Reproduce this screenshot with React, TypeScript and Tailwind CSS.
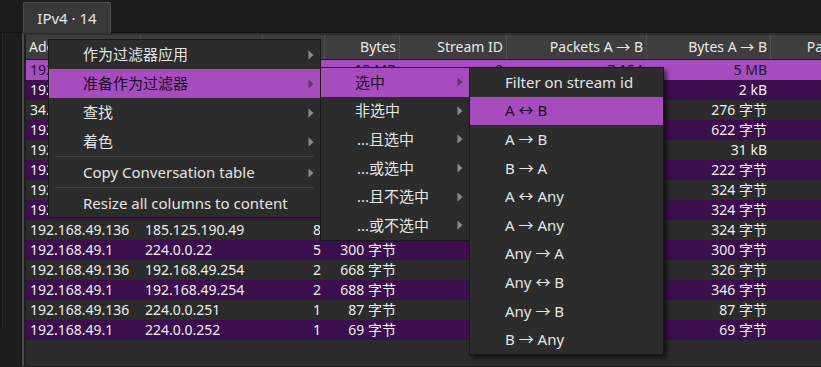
import React from "react";

type Row = {
  a: string;
  b: string;
  packets: string;
  bytes: string;
  sid: string;
  pab: string;
  bab: string;
  pba: string;
};

const ROWS: Row[] = [
  { a: "192.168.49.136", b: "91.189.91.49", packets: "9,870", bytes: "13 MB", sid: "0", pab: "7,154", bab: "5 MB", pba: "2,716" },
  { a: "192.168.49.1", b: "192.168.49.136", packets: "14", bytes: "2 kB", sid: "1", pab: "8", bab: "2 kB", pba: "6" },
  { a: "34.107.221.82", b: "192.168.49.136", packets: "4", bytes: "552 字节", sid: "2", pab: "2", bab: "276 字节", pba: "2" },
  { a: "192.168.49.136", b: "185.125.188.54", packets: "9", bytes: "1 kB", sid: "3", pab: "5", bab: "622 字节", pba: "4" },
  { a: "192.168.49.136", b: "91.189.91.98", packets: "60", bytes: "48 kB", sid: "4", pab: "33", bab: "31 kB", pba: "27" },
  { a: "192.168.49.136", b: "34.117.65.55", packets: "5", bytes: "444 字节", sid: "5", pab: "3", bab: "222 字节", pba: "2" },
  { a: "192.168.49.136", b: "185.125.190.57", packets: "8", bytes: "648 字节", sid: "6", pab: "4", bab: "324 字节", pba: "4" },
  { a: "192.168.49.136", b: "185.125.190.58", packets: "8", bytes: "648 字节", sid: "7", pab: "4", bab: "324 字节", pba: "4" },
  { a: "192.168.49.136", b: "185.125.190.49", packets: "8", bytes: "648 字节", sid: "8", pab: "4", bab: "324 字节", pba: "4" },
  { a: "192.168.49.1", b: "224.0.0.22", packets: "5", bytes: "300 字节", sid: "9", pab: "5", bab: "300 字节", pba: "0" },
  { a: "192.168.49.136", b: "192.168.49.254", packets: "2", bytes: "668 字节", sid: "10", pab: "1", bab: "326 字节", pba: "1" },
  { a: "192.168.49.1", b: "192.168.49.254", packets: "2", bytes: "688 字节", sid: "11", pab: "1", bab: "346 字节", pba: "1" },
  { a: "192.168.49.136", b: "224.0.0.251", packets: "1", bytes: "87 字节", sid: "12", pab: "1", bab: "87 字节", pba: "0" },
  { a: "192.168.49.1", b: "224.0.0.252", packets: "1", bytes: "69 字节", sid: "13", pab: "1", bab: "69 字节", pba: "0" },
];

const COLS = [
  { key: "a", title: "Address A", w: "w-[115px]", left: true },
  { key: "b", title: "Address B", w: "w-[122px]", left: true },
  { key: "packets", title: "Total", w: "w-[62px]", left: false },
  { key: "bytes", title: "Bytes", w: "w-[75px]", left: false },
  { key: "sid", title: "Stream ID", w: "w-[107px]", left: false },
  { key: "pab", title: "Packets A → B", w: "w-[140px]", left: false },
  { key: "bab", title: "Bytes A → B", w: "w-[124px]", left: false },
  { key: "pba", title: "Packets B → A", w: "w-[133px]", left: false },
] as const;

function Arrow({ dark }: { dark?: boolean }) {
  return (
    <svg width="6" height="10" viewBox="0 0 6 10" className="shrink-0">
      <path d="M0.5 0.5 L5.5 5 L0.5 9.5 Z" fill={dark ? "#5a3a66" : "#8c8c8c"} />
    </svg>
  );
}

function MenuItem({
  label,
  arrow,
  active,
  pl,
  h = "h-[29px]",
}: {
  label: string;
  arrow?: boolean;
  active?: boolean;
  pl: string;
  h?: string;
}) {
  return (
    <div
      className={`${h} flex items-center justify-between ${pl} pr-[6px] ${
        active ? "bg-[#a64cbf] text-[#1d0d26]" : "text-[#e4e4e4]"
      }`}
    >
      <span className="whitespace-nowrap">{label}</span>
      {arrow && <Arrow dark={active} />}
    </div>
  );
}

function Sep() {
  return (
    <div className="pb-px px-[6px]">
      <div className="h-px bg-[#404040]" />
    </div>
  );
}

export default function App() {
  return (
    <div
      className="relative w-[821px] h-[367px] overflow-hidden bg-[#1d1d1d] text-[14px] leading-none"
      style={{ fontFamily: '"Noto Sans", "Noto Sans CJK SC", sans-serif' }}
    >
      {/* tab strip */}
      <div className="h-[33px] pl-[23px] pt-[2px] flex border-b border-[#141414]">
        <div className="w-[88px] h-[31px] bg-[#393939] border border-b-0 border-[#4d4d4d] rounded-t-[2px] flex items-center justify-center text-[#e6e6e6] text-[15px]">
          IPv4 · 14
        </div>
      </div>

      <div className="flex h-[333px]">
        <div className="w-[22px] flex">
          <div className="w-[3px] h-[295px] border-r border-[#2a2a2a] bg-[#171717]" />
          <div className="flex-1" />
        </div>

        {/* table frame */}
        <div className="flex-1 border-l-2 border-[#4a4a4a] border-t-2 border-t-[#2f2f2f] bg-[#2b2b2b] flex flex-col min-w-0">
          <div className="flex-1 border-l-2 border-[#1f1f1f] overflow-hidden">
            <div className="flex h-[25px] bg-[#3e3e3e] border-b border-[#1e1e1e] text-[#e8e8e8]">
              {COLS.map((c) => (
                <div
                  key={c.key}
                  className={`${c.w} shrink-0 h-full flex items-center border-r border-[#505050] px-[3px] whitespace-nowrap ${
                    c.left ? "justify-start" : "justify-end"
                  }`}
                >
                  {c.title}
                </div>
              ))}
            </div>

            {ROWS.map((r, i) => {
              const sel = i === 0;
              const bg = sel ? "bg-[#a64cbf] text-[#1a1838]" : i % 2 === 1 ? "bg-[#3c0e4e] text-[#ececec]" : "bg-[#2b2b2b] text-[#ececec]";
              return (
                <div key={i} className={`flex h-[20px] ${bg}`}>
                  {COLS.map((c) => (
                    <div
                      key={c.key}
                      className={`${c.w} shrink-0 h-full flex items-center px-[4px] whitespace-nowrap ${
                        c.left ? "justify-start" : "justify-end"
                      }`}
                    >
                      {r[c.key as keyof Row]}
                    </div>
                  ))}
                </div>
              );
            })}
          </div>
        </div>
      </div>

      {/* context menu */}
      <div className="absolute left-[48px] top-[39px] w-[273px] bg-[#2c2c2c] border border-[#1a1a1a] text-[15px]">
        <MenuItem label="作为过滤器应用" arrow pl="pl-[34px]" />
        <MenuItem label="准备作为过滤器" arrow active pl="pl-[34px]" />
        <MenuItem label="查找" arrow pl="pl-[34px]" />
        <MenuItem label="着色" arrow pl="pl-[34px]" />
        <Sep />
        <MenuItem label="Copy Conversation table" arrow pl="pl-[34px]" />
        <Sep />
        <MenuItem label="Resize all columns to content" pl="pl-[34px]" h="h-[28px]" />
      </div>

      {/* submenu */}
      <div className="absolute left-[320px] top-[67px] w-[150px] bg-[#2c2c2c] border border-[#1a1a1a] text-[15px]">
        <MenuItem label="选中" arrow active pl="pl-[34px]" h="h-[28.6px]" />
        <MenuItem label="非选中" arrow pl="pl-[34px]" h="h-[28.6px]" />
        <MenuItem label="...且选中" arrow pl="pl-[36px]" h="h-[28.6px]" />
        <MenuItem label="...或选中" arrow pl="pl-[36px]" h="h-[28.6px]" />
        <MenuItem label="...且不选中" arrow pl="pl-[36px]" h="h-[28.6px]" />
        <MenuItem label="...或不选中" arrow pl="pl-[36px]" h="h-[28.6px]" />
      </div>

      {/* sub-submenu */}
      <div className="absolute left-[469px] top-[67px] w-[195px] bg-[#2c2c2c] border border-[#1a1a1a] text-[15px] shadow-[3px_3px_4px_rgba(0,0,0,0.55)]">
        <MenuItem label="Filter on stream id" pl="pl-[35px]" h="h-[28.6px]" />
        <MenuItem label="A ↔ B" active pl="pl-[35px]" h="h-[28.6px]" />
        <MenuItem label="A → B" pl="pl-[35px]" h="h-[28.6px]" />
        <MenuItem label="B → A" pl="pl-[35px]" h="h-[28.6px]" />
        <MenuItem label="A ↔ Any" pl="pl-[35px]" h="h-[28.6px]" />
        <MenuItem label="A → Any" pl="pl-[35px]" h="h-[28.6px]" />
        <MenuItem label="Any → A" pl="pl-[35px]" h="h-[28.6px]" />
        <MenuItem label="Any ↔ B" pl="pl-[35px]" h="h-[28.6px]" />
        <MenuItem label="Any → B" pl="pl-[35px]" h="h-[28.6px]" />
        <MenuItem label="B → Any" pl="pl-[35px]" h="h-[28.6px]" />
      </div>
    </div>
  );
}
